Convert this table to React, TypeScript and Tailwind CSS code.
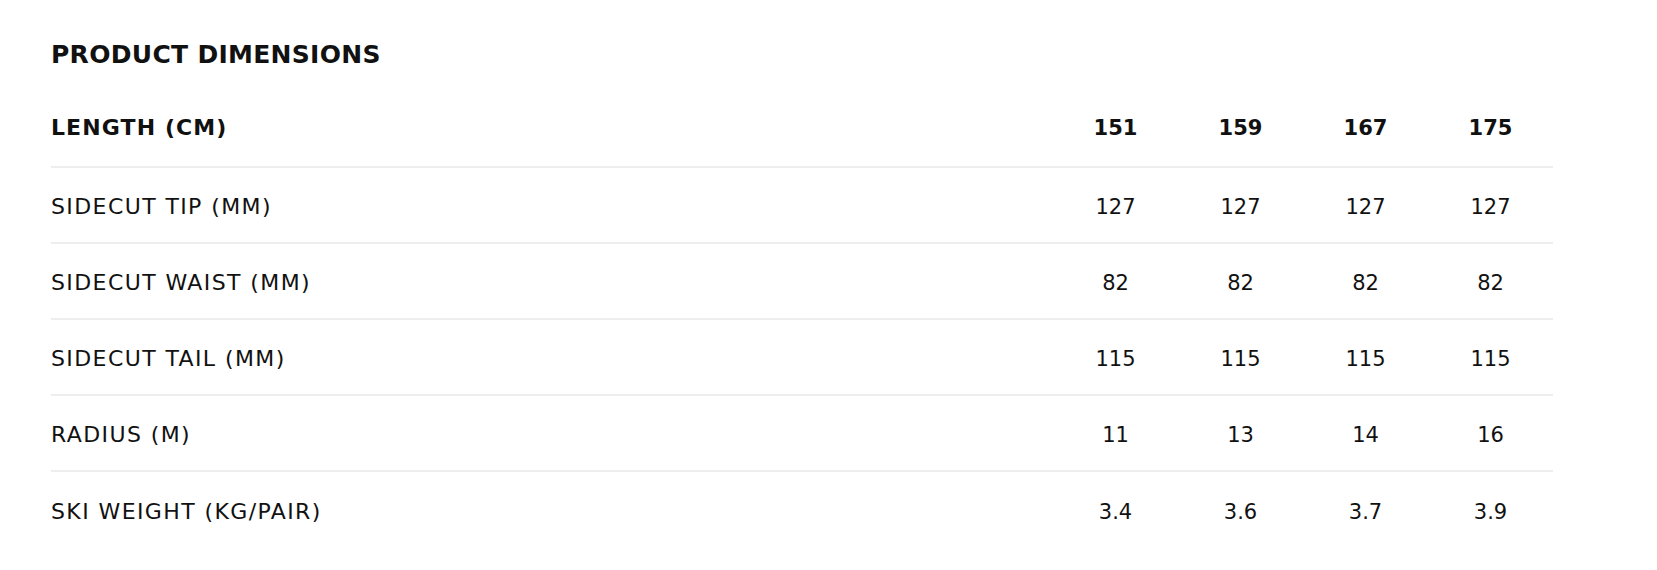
import React from "react";

const sizes = ["151", "159", "167", "175"];

const rows: { label: string; values: string[] }[] = [
  { label: "SIDECUT TIP (MM)", values: ["127", "127", "127", "127"] },
  { label: "SIDECUT WAIST (MM)", values: ["82", "82", "82", "82"] },
  { label: "SIDECUT TAIL (MM)", values: ["115", "115", "115", "115"] },
  { label: "RADIUS (M)", values: ["11", "13", "14", "16"] },
  { label: "SKI WEIGHT (KG/PAIR)", values: ["3.4", "3.6", "3.7", "3.9"] },
];

const App: React.FC = () => {
  return (
    <div
      className="min-h-[570px] w-full bg-white pl-[51px] pt-[39px] text-[#111]"
      style={{ fontFamily: '"DejaVu Sans", "Liberation Sans", sans-serif' }}
    >
      <h2 className="text-[25px] leading-[32px] font-bold tracking-[0.3px]">PRODUCT DIMENSIONS</h2>
      <div className="mt-[20px] w-[1502px]">
        <div className="grid h-[77px] grid-cols-[1002px_125px_125px_125px_125px] items-center border-b-2 border-[#eeeeee] pb-[1px] font-bold">
          <span className="text-[22px] leading-[24px] tracking-[1.1px]">LENGTH (CM)</span>
          {sizes.map((s) => (
            <span key={s} className="text-center text-[21px] leading-[24px]">
              {s}
            </span>
          ))}
        </div>
        {rows.map((row, i) => (
          <div
            key={row.label}
            className={
              "grid h-[76px] grid-cols-[1002px_125px_125px_125px_125px] items-center pt-[3px] " +
              (i < rows.length - 1 ? "border-b-2 border-[#eeeeee]" : "")
            }
          >
            <span className="text-[22px] leading-[24px] tracking-[1.4px]">{row.label}</span>
            {row.values.map((v, j) => (
              <span key={j} className="text-center text-[21px] leading-[24px]">
                {v}
              </span>
            ))}
          </div>
        ))}
      </div>
    </div>
  );
};

export default App;
